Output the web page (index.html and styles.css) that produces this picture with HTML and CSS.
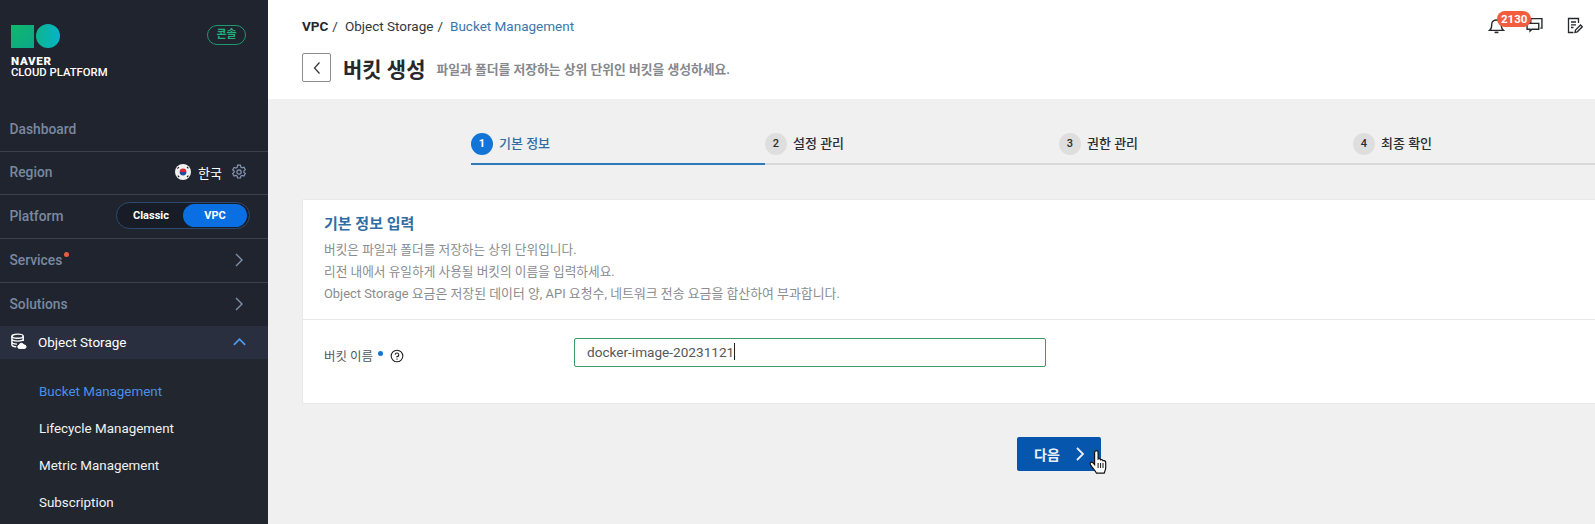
FILE: index.html
```html
<!DOCTYPE html>
<html lang="ko">
<head>
    <meta charset="UTF-8">
    <title>버킷 생성</title>
    <link rel="stylesheet" href="styles.css">
</head>
<body>
    <aside class="sidebar">
        <div class="brand">
            <div class="logo-block">
                <div class="logo-shapes">
                    <span class="logo-square"></span>
                    <span class="logo-circle"></span>
                </div>
                <div class="logo-naver">NAVER</div>
                <div class="logo-cloud">CLOUD PLATFORM</div>
            </div>
            <span class="console-tag">콘솔</span>
        </div>

        <div class="side-row">
            <span class="side-label">Dashboard</span>
        </div>
        <div class="side-row side-short">
            <span class="side-label">Region</span>
            <div class="region-value">
                <svg class="flag" viewBox="0 0 16 16">
                    <circle cx="8" cy="8" r="8" fill="#f1f1f1"/>
                    <path d="M4.6 8a3.4 3.4 0 0 1 6.8 0z" fill="#d8283c"/>
                    <path d="M4.6 8a3.4 3.4 0 0 0 6.8 0z" fill="#1f4c9c"/>
                    <path d="M2.4 4.6l1.6-1.4M2.8 11.6l1.4 1.4M13.4 4.4l-1.4-1.4M13.4 11.6l-1.4 1.4" stroke="#222" stroke-width="1.1"/>
                </svg>
                <span class="region-name">한국</span>
                <svg class="gear" viewBox="0 0 16 16" fill="none" stroke="#8696b0" stroke-width="1.2">
                    <path d="M6.6 1.2h2.8l.4 1.9 1.3.7 1.8-.6 1.4 2.4-1.4 1.3v1.4l1.4 1.3-1.4 2.4-1.8-.6-1.3.7-.4 1.9H6.6l-.4-1.9-1.3-.7-1.8.6-1.4-2.4 1.4-1.3V7.1L1.7 5.8l1.4-2.4 1.8.6 1.3-.7z"/>
                    <circle cx="8" cy="8" r="2.2"/>
                </svg>
            </div>
        </div>
        <div class="side-row">
            <span class="side-label">Platform</span>
            <div class="platform-switch">
                <span class="switch-item">Classic</span>
                <span class="switch-item switch-on">VPC</span>
            </div>
        </div>
        <div class="side-row">
            <span class="side-label">Services<i class="red-dot"></i></span>
            <svg class="chev" viewBox="0 0 10 16" fill="none" stroke="#8492a8" stroke-width="1.4"><path d="M2 2l6 6-6 6"/></svg>
        </div>
        <div class="side-row side-short side-last">
            <span class="side-label">Solutions</span>
            <svg class="chev" viewBox="0 0 10 16" fill="none" stroke="#8492a8" stroke-width="1.4"><path d="M2 2l6 6-6 6"/></svg>
        </div>

        <div class="service-head">
            <svg class="storage-icon" viewBox="0 0 18 18" fill="none" stroke="#ffffff" stroke-width="1.5">
                <ellipse cx="8" cy="3.4" rx="6" ry="2.2"/>
                <path d="M2 3.4v9c0 1.2 2.2 2 4.6 2.2M14 3.4v5M2 6.4c0 1.2 2.7 2.2 6 2.2s6-1 6-2.2M2 9.6c0 1.2 2.4 2.1 5.4 2.2"/>
                <path d="M9.6 16.4a1.8 1.8 0 0 1 0-3.5 2.6 2.6 0 0 1 5 -.2 1.9 1.9 0 0 1 1 3.7z" fill="#fff" stroke-width="1"/>
            </svg>
            <span class="service-name">Object Storage</span>
            <svg class="chev-up" viewBox="0 0 16 10" fill="none" stroke="#4f9bf0" stroke-width="1.8"><path d="M2 8l6-6 6 6"/></svg>
        </div>
        <ul class="sub-menu">
            <li class="sub-active">Bucket Management</li>
            <li>Lifecycle Management</li>
            <li>Metric Management</li>
            <li>Subscription</li>
        </ul>
    </aside>

    <main class="main">
        <header class="page-head">
            <div class="top-line">
                <div class="crumbs">
                    <b>VPC</b><span class="slash">/</span><span>Object Storage</span><span class="slash">/</span><span class="crumb-now">Bucket Management</span>
                </div>
                <div class="top-icons">
                    <div class="bell-wrap">
                        <svg class="top-icon" viewBox="0 0 16 16" fill="none" stroke="#26282c" stroke-width="1.3">
                            <path d="M1.500 12.600h13c-1.300-1-1.800-2-1.900-3.800l-.1-2C12.400 4.400 10.300 2.800 8 2.800S3.600 4.400 3.500 6.800l-.1 2C3.300 10.600 2.800 11.600 1.500 12.600z"/>
                            <path d="M6.200 14.500h3.600" stroke-width="1.500"/>
                        </svg>
                        <span class="count-badge">2130</span>
                    </div>
                    <svg class="top-icon chat-icon" viewBox="0 0 16 16" fill="none" stroke="#26282c" stroke-width="1.3">
                        <path d="M4.500 6V1.500h10.500v9h-1.500"/>
                        <path d="M1 6h11v5.500H5.500l-1.700 1.700V11.500H1z" fill="#fff"/>
                    </svg>
                    <svg class="top-icon note-icon" viewBox="0 0 16 16" fill="none" stroke="#26282c" stroke-width="1.300">
                        <path d="M11.500 5.500V1H1.500v14h5"/>
                        <path d="M4 4.500h5M4 7.300h5M4 10h2.500"/>
                        <path d="M8 14.800l.5-2.300 5-5 1.800 1.800-5 5z"/>
                    </svg>
                </div>
            </div>
            <div class="title-line">
                <button class="back-btn" type="button">
                    <svg viewBox="0 0 8 14" fill="none" stroke="#333" stroke-width="1.2"><path d="M6.500 1.500L1.500 7l5 5.500"/></svg>
                </button>
                <h1>버킷 생성</h1>
                <p class="title-note">파일과 폴더를 저장하는 상위 단위인 버킷을 생성하세요.</p>
            </div>
        </header>

        <div class="content">
            <ol class="steps">
                <li class="step step-on"><span class="step-num">1</span>기본 정보</li>
                <li class="step"><span class="step-num">2</span>설정 관리</li>
                <li class="step"><span class="step-num">3</span>권한 관리</li>
                <li class="step step-end"><span class="step-num">4</span>최종 확인</li>
            </ol>

            <section class="card">
                <div class="card-top">
                    <h2>기본 정보 입력</h2>
                    <p>버킷은 파일과 폴더를 저장하는 상위 단위입니다.</p>
                    <p>리전 내에서 유일하게 사용될 버킷의 이름을 입력하세요.</p>
                    <p class="fee-note">Object Storage 요금은 저장된 데이터 양, API 요청수, 네트워크 전송 요금을 합산하여 부과합니다.</p>
                </div>
                <div class="form-row">
                    <div class="form-label">
                        버킷 이름<i class="req-dot"></i>
                        <svg class="help" viewBox="0 0 14 14" fill="none" stroke="#222" stroke-width="1.100">
                            <circle cx="7" cy="7" r="5.800"/>
                            <path d="M5.200 5.600A1.800 1.800 0 1 1 7 7.600v.8M7 9.600v1.200"/>
                        </svg>
                    </div>
                    <div class="name-input">docker-image-20231121<span class="caret"></span></div>
                </div>
            </section>

            <div class="actions">
                <div class="next-wrap">
                    <button class="next-btn" type="button">
                        다음
                        <svg viewBox="0 0 10 16" fill="none" stroke="#e8f1fb" stroke-width="1.800"><path d="M2 2l6 6-6 6"/></svg>
                    </button>
                    <svg class="hand" viewBox="0 0 18 25">
                        <path d="M7.500.7c1 0 1.600.7 1.600 1.700V9c1.200-.6 2.300-.2 2.500.8 1.100-.5 2.200-.1 2.400 1 1.200-.4 2.700 0 2.700 1.600v5c0 2.200-.8 3.500-1.500 5.800H7.500c-.8-2.200-2.600-3.600-5.500-7.600-.9-1.300-1.200-2.600-.3-3.200 1-.7 2.200.1 3.900 2.100V2.400c0-1 .8-1.700 1.900-1.700z" fill="#fff" stroke="#111" stroke-width="1.200"/>
                        <path d="M9.100 13v5M11.600 13v5M14 13v5" stroke="#111" stroke-width="1"/>
                    </svg>
                </div>
            </div>
        </div>
    </main>
</body>
</html>
```

FILE: styles.css
```css
* {
    box-sizing: border-box;
}

body {
    margin: 0;
    height: 524px;
    display: flex;
    overflow: hidden;
    font-family: Roboto, "Noto Sans CJK KR", sans-serif;
    background-color: #f0f0f0;
    color: #26282c;
}

/* sidebar */
.sidebar {
    width: 268px;
    flex-shrink: 0;
    background-color: #1f242f;
    color: #ffffff;
}

.brand {
    height: 108px;
    padding: 24px 22px 0 11px;
    display: flex;
    justify-content: space-between;
    align-items: flex-start;
}

.logo-shapes {
    display: flex;
    align-items: center;
    gap: 2px;
}

.logo-square {
    width: 23px;
    height: 23px;
    background: linear-gradient(135deg, #0fb86a, #0ca78b);
}

.logo-circle {
    width: 24px;
    height: 24px;
    border-radius: 50%;
    background: linear-gradient(90deg, #0cb58e, #06b4c8);
}

.logo-naver {
    margin-top: 7px;
    font-size: 11.5px;
    line-height: 12px;
    font-weight: 900;
    letter-spacing: 0.7px;
}

.logo-cloud {
    font-size: 11.3px;
    line-height: 12px;
    font-weight: 500;
}

.console-tag {
    width: 39px;
    height: 20px;
    margin-top: 1px;
    border: 1.5px solid #1c9a6e;
    border-radius: 10px;
    color: #1fb07c;
    font-size: 11px;
    font-weight: 700;
    line-height: 17px;
    text-align: center;
}

.side-row {
    height: 44px;
    padding: 0 21px 2px 9.5px;
    display: flex;
    justify-content: space-between;
    align-items: center;
    border-bottom: 1px solid #3a404c;
}

.side-short {
    height: 43px;
}

.side-last {
    border-bottom: none;
}

.side-label {
    position: relative;
    color: #7a88a0;
    font-size: 13.8px;
    font-weight: 500;
}

.red-dot {
    position: absolute;
    top: 0;
    right: -7px;
    width: 5px;
    height: 5px;
    border-radius: 50%;
    background-color: #f05a44;
}

.region-value {
    display: flex;
    align-items: center;
}

.flag {
    width: 16px;
    height: 16px;
}

.region-name {
    margin-left: 7px;
    font-size: 13px;
}

.gear {
    width: 16px;
    height: 16px;
    margin-left: 9px;
}

.platform-switch {
    width: 134px;
    height: 27px;
    margin-right: -3px;
    padding: 2px;
    display: flex;
    align-items: center;
    border: 1px solid #2d4a6e;
    border-radius: 14px;
    background-color: #171c26;
}

.switch-item {
    width: 65px;
    text-align: center;
    font-size: 11px;
    font-weight: 700;
}

.switch-on {
    height: 23px;
    line-height: 23px;
    border-radius: 12px;
    background-color: #0a6fe3;
}

.chev {
    width: 10px;
    height: 16px;
    margin-right: 3px;
}

.service-head {
    height: 33px;
    padding: 0 21px 2px 10px;
    display: flex;
    align-items: center;
    background-color: #2a2f40;
}

.storage-icon {
    width: 17px;
    height: 17px;
}

.service-name {
    flex: 1;
    margin-left: 11px;
    font-size: 13.5px;
}

.chev-up {
    width: 15px;
    height: 10px;
}

.sub-menu {
    margin: 0;
    padding: 14px 0 0 39px;
    height: 168px;
    list-style: none;
    background-color: #22262f;
    font-size: 13.4px;
}

.sub-menu li {
    height: 37px;
    line-height: 37px;
    color: #f2f2f2;
}

.sub-menu .sub-active {
    color: #4a90e8;
}

/* header */
.main {
    flex: 1;
    min-width: 0;
}

.page-head {
    height: 99px;
    padding: 0 12px 0 34px;
    background-color: #ffffff;
}

.top-line {
    height: 53px;
    display: flex;
    justify-content: space-between;
}

.crumbs {
    padding-top: 17px;
    font-size: 13.5px;
    line-height: 18px;
    color: #33363b;
}

.crumbs b {
    font-weight: 700;
    color: #26282c;
}

.slash {
    margin: 0 7px 0 4px;
}

.crumb-now {
    color: #3b76ad;
}

.top-icons {
    padding-top: 17px;
    display: flex;
    align-items: flex-start;
}

.bell-wrap {
    position: relative;
}

.top-icon {
    display: block;
    width: 17px;
    height: 17px;
}

.count-badge {
    position: absolute;
    top: -6px;
    left: 9px;
    height: 16px;
    padding: 0 4px;
    border-radius: 8px;
    background-color: #f25c3f;
    color: #ffffff;
    font-size: 11.5px;
    font-weight: 700;
    line-height: 16px;
}

.chat-icon {
    margin-left: 21px;
}

.note-icon {
    margin-left: 24px;
    width: 16px;
}

.title-line {
    display: flex;
    align-items: center;
    height: 29px;
}

.back-btn {
    width: 29px;
    height: 29px;
    padding: 0;
    border: 1px solid #8a8d92;
    border-radius: 2px;
    background: #ffffff;
}

.back-btn svg {
    display: block;
    width: 8px;
    height: 14px;
    margin: 0 auto;
}

.page-head h1 {
    margin: 0 0 0 12px;
    font-size: 21px;
    font-weight: 700;
}

.title-note {
    margin: 1px 0 0 11px;
    font-size: 12.8px;
    font-weight: 700;
    color: #85888d;
}

/* steps */
.content {
    padding: 34px 0 0 34px;
}

.steps {
    margin: 0 0 34px 169px;
    padding: 0;
    display: flex;
    list-style: none;
}

.step {
    width: 294px;
    height: 32px;
    display: flex;
    align-items: flex-start;
    border-bottom: 2px solid #d9d9d9;
    font-size: 13px;
    font-weight: 500;
    line-height: 22px;
    color: #2b2d31;
}

.step-end {
    flex: 1;
}

.step-on {
    border-bottom: 2px solid #2f7ab8;
    color: #2f6da5;
}

.step-num {
    width: 22px;
    height: 22px;
    margin-right: 6px;
    border-radius: 50%;
    background-color: #dedede;
    font-size: 11px;
    font-weight: 500;
    text-align: center;
}

.step-on .step-num {
    background-color: #1274d6;
    color: #ffffff;
    font-weight: 700;
}

/* card */
.card {
    height: 205px;
    margin-right: -4px;
    border: 1px solid #e8e8e8;
    border-radius: 2px;
    background-color: #ffffff;
}

.card-top {
    height: 120px;
    padding: 15px 21px 0;
    border-bottom: 1px solid #e6e6e6;
}

.card-top h2 {
    margin: 0 0 6px;
    font-size: 15px;
    line-height: 18px;
    font-weight: 700;
    color: #2f6da5;
}

.card-top p {
    margin: 0;
    font-size: 12.7px;
    line-height: 22px;
    color: #8a8c90;
}

.card-top .fee-note {
    font-size: 12.9px;
}

.form-row {
    padding: 18px 21px 0;
    display: flex;
    align-items: center;
}

.form-label {
    width: 250px;
    padding-top: 6px;
    display: flex;
    align-items: center;
    font-size: 12.5px;
    color: #55585c;
}

.req-dot {
    width: 5px;
    height: 5px;
    margin: -5px 0 0 5px;
    border-radius: 50%;
    background-color: #1274d6;
}

.help {
    width: 14px;
    height: 14px;
    margin-left: 7px;
}

.name-input {
    width: 472px;
    height: 29px;
    padding-left: 12px;
    border: 1px solid #3f9a63;
    border-radius: 2px;
    font-size: 13.6px;
    line-height: 27px;
    color: #55585c;
}

.caret {
    display: inline-block;
    width: 1px;
    height: 17px;
    vertical-align: -3px;
    background-color: #222222;
}

/* next button */
.actions {
    padding: 33px 0 0 715px;
}

.next-wrap {
    position: relative;
    width: 84px;
}

.next-btn {
    width: 84px;
    height: 34px;
    padding: 0 16px 0 17px;
    display: flex;
    justify-content: space-between;
    align-items: center;
    border: none;
    border-radius: 2px;
    background-color: #0756ae;
    color: #e8f1fb;
    font-family: inherit;
    font-size: 14px;
    font-weight: 700;
}

.next-btn svg {
    width: 10px;
    height: 16px;
}

.hand {
    position: absolute;
    left: 72px;
    top: 13px;
    width: 18px;
    height: 25px;
}
```
